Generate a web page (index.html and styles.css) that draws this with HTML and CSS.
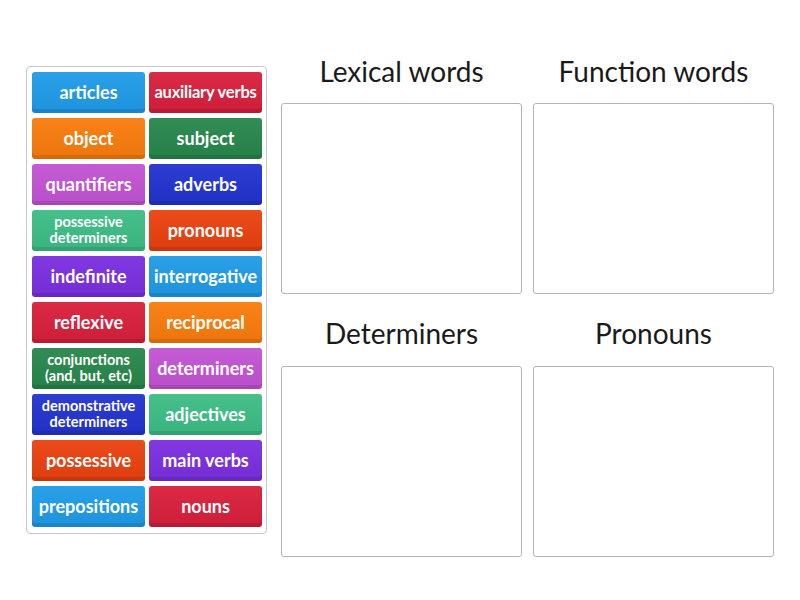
FILE: index.html
```html
<!DOCTYPE html>
<html>
<head>
<meta charset="utf-8">
<link rel="stylesheet" href="styles.css">
</head>
<body>
<div class="page">
  <div class="bank">
    <div class="tile blue">articles</div>
    <div class="tile red sm">auxiliary verbs</div>
    <div class="tile orange">object</div>
    <div class="tile green">subject</div>
    <div class="tile magenta">quantifiers</div>
    <div class="tile navy">adverbs</div>
    <div class="tile teal two"><span>possessive</span><span>determiners</span></div>
    <div class="tile vermilion">pronouns</div>
    <div class="tile purple">indefinite</div>
    <div class="tile blue">interrogative</div>
    <div class="tile red">reflexive</div>
    <div class="tile orange">reciprocal</div>
    <div class="tile green two"><span>conjunctions</span><span>(and, but, etc)</span></div>
    <div class="tile magenta">determiners</div>
    <div class="tile navy two"><span>demonstrative</span><span>determiners</span></div>
    <div class="tile teal">adjectives</div>
    <div class="tile vermilion">possessive</div>
    <div class="tile purple">main verbs</div>
    <div class="tile blue">prepositions</div>
    <div class="tile red">nouns</div>
  </div>
  <div class="groups">
    <div class="group">
      <div class="title">Lexical words</div>
      <div class="box"></div>
    </div>
    <div class="group">
      <div class="title">Function words</div>
      <div class="box"></div>
    </div>
    <div class="group second">
      <div class="title">Determiners</div>
      <div class="box"></div>
    </div>
    <div class="group second">
      <div class="title">Pronouns</div>
      <div class="box"></div>
    </div>
  </div>
</div>
</body>
</html>
```

FILE: styles.css
```css
html, body {
  margin: 0;
  padding: 0;
  background: #fff;
}
.page {
  width: 800px;
  height: 600px;
  display: flex;
  align-items: flex-start;
  font-family: Lato, "Open Sans", sans-serif;
}
.bank {
  margin: 66px 0 0 26px;
  width: 230px;
  border: 1px solid #c8c8c8;
  border-radius: 4px;
  padding: 5px 4px 6px 5px;
  display: grid;
  grid-template-columns: 113px 113px;
  grid-auto-rows: 41px;
  column-gap: 4px;
  row-gap: 5px;
}
.tile {
  border-radius: 3px;
  color: #fff;
  font-weight: 700;
  font-size: 18px;
  display: flex;
  align-items: center;
  justify-content: center;
  text-align: center;
  padding-bottom: 2px;
  box-sizing: border-box;
  box-shadow: inset 0 -4px 0 rgba(0, 0, 0, 0.1);
  background-image: linear-gradient(to bottom, rgba(255,255,255,0.05), rgba(0,0,0,0.05));
  white-space: nowrap;
}
.tile.sm { font-size: 16.5px; letter-spacing: -0.2px; }
.tile.two {
  flex-direction: column;
  font-size: 14.5px;
  line-height: 17px;
}
.tile.two span { display: block; height: 16px; line-height: 16px; }
.blue { background-color: #1f9be8; }
.red { background-color: #d81f3c; }
.orange { background-color: #f97c0c; }
.green { background-color: #26874a; }
.magenta { background-color: #c352d4; }
.navy { background-color: #2232cf; }
.teal { background-color: #3cbd85; }
.vermilion { background-color: #ea410f; }
.purple { background-color: #7a2ee0; }

.groups {
  margin: 40px 0 0 14px;
  display: grid;
  grid-template-columns: 241px 241px;
  column-gap: 11px;
}
.group {
  display: flex;
  flex-direction: column;
}
.title {
  height: 63px;
  display: flex;
  align-items: center;
  justify-content: center;
  font-size: 28px;
  color: #1a1a1a;
  padding-bottom: 1px;
  box-sizing: border-box;
}
.group.second .title {
  height: 72px;
  padding-top: 6px;
}
.box {
  height: 191px;
  border: 1px solid #b4b4b4;
  border-radius: 3px;
  box-sizing: border-box;
}
```
